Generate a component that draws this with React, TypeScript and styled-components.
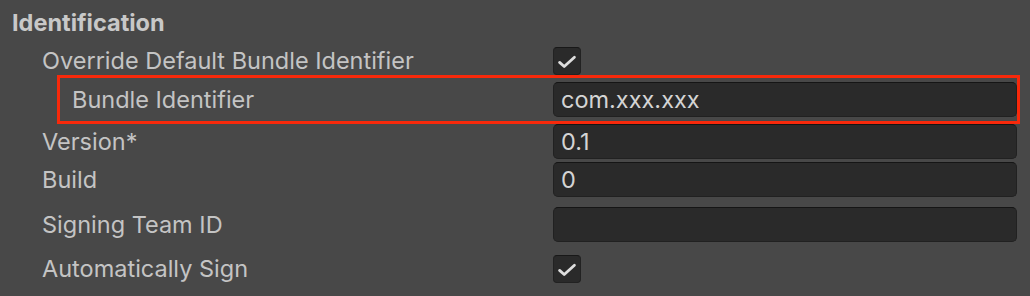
import React from 'react';
import styled, { createGlobalStyle } from 'styled-components';

const GlobalStyle = createGlobalStyle`
    html, body {
        margin: 0;
        padding: 0;
        background: #484848;
    }
    body {
        font-family: 'Inter', 'Noto Sans', sans-serif;
        color: #c4c4c4;
    }
`;

const Panel = styled.div`
    display: flex;
    flex-direction: column;
    width: 1030px;
    height: 296px;
    background: #484848;
    overflow: hidden;
`;

const Header = styled.div`
    display: flex;
    align-items: center;
    height: 44px;
    padding-left: 12px;
    font-size: 23.5px;
    font-weight: 700;
    color: #c8c8c8;
`;

const Row = styled.div<{ $indent: number; $top: number; $height: number }>`
    display: grid;
    grid-template-columns: ${(p) => 553 - p.$indent}px 464px;
    align-items: center;
    height: ${(p) => p.$height}px;
    margin-top: ${(p) => p.$top}px;
    padding-left: ${(p) => p.$indent}px;
`;

const Highlight = styled.div`
    display: flex;
    flex-direction: column;
    justify-content: center;
    box-sizing: border-box;
    width: 963px;
    height: 49px;
    margin-left: 57px;
    margin-top: 1px;
    border: 3px solid #f8290b;
`;

const HighlightRow = styled.div`
    display: grid;
    grid-template-columns: 481px 464px;
    align-items: center;
    padding-left: 12px;
`;

const Label = styled.span`
    font-size: 23.5px;
    font-weight: 400;
    color: #c4c4c4;
    white-space: nowrap;
`;

const Field = styled.div`
    display: flex;
    align-items: center;
    box-sizing: border-box;
    height: 35px;
    padding-left: 7px;
    background: #2a2a2a;
    border: 1px solid #212121;
    border-top-color: #151515;
    border-radius: 5px;
    font-size: 23.5px;
    color: #d4d4d4;
`;

const Box = styled.div`
    display: flex;
    align-items: center;
    justify-content: center;
    box-sizing: border-box;
    width: 28px;
    height: 28px;
    background: #2a2a2a;
    border: 1px solid #222;
    border-top-color: #181818;
    border-radius: 4px;
`;

function Check() {
    return (
        <Box>
            <svg width="28" height="28" viewBox="0 0 28 28">
                <polyline
                    points="6,15.5 11,20 22,10"
                    fill="none"
                    stroke="#dedede"
                    strokeWidth="3"
                    strokeLinecap="round"
                    strokeLinejoin="round"
                />
            </svg>
        </Box>
    );
}

export default function App() {
    return (
        <Panel>
            <GlobalStyle />
            <Header>Identification</Header>
            <Row $indent={42} $top={2} $height={28}>
                <Label>Override Default Bundle Identifier</Label>
                <Check />
            </Row>
            <Highlight>
                <HighlightRow>
                    <Label>Bundle Identifier</Label>
                    <Field>com.xxx.xxx</Field>
                </HighlightRow>
            </Highlight>
            <Row $indent={42} $top={0} $height={35}>
                <Label>Version*</Label>
                <Field>0.1</Field>
            </Row>
            <Row $indent={42} $top={3} $height={35}>
                <Label>Build</Label>
                <Field>0</Field>
            </Row>
            <Row $indent={42} $top={10} $height={35}>
                <Label>Signing Team ID</Label>
                <Field />
            </Row>
            <Row $indent={42} $top={12} $height={28}>
                <Label>Automatically Sign</Label>
                <Check />
            </Row>
        </Panel>
    );
}
